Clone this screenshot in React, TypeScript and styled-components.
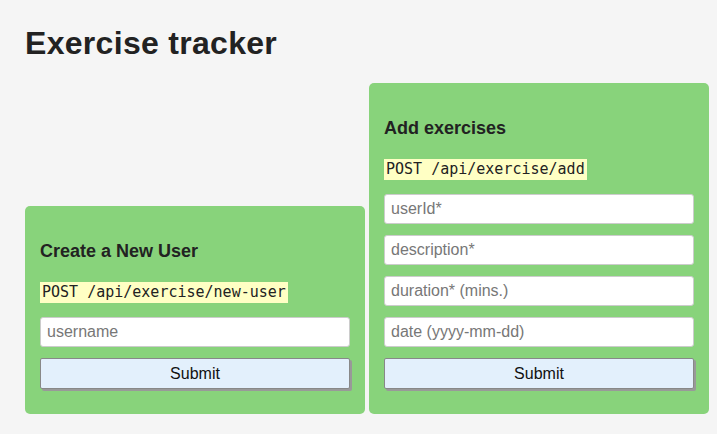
import styled, { createGlobalStyle } from "styled-components";

const GlobalStyle = createGlobalStyle`
  html, body {
    margin: 0;
    padding: 0;
    background: #f5f5f5;
    color: #222;
    font-family: "Liberation Sans", Arial, sans-serif;
  }
`;

const Page = styled.div`
  padding: 25px 8px 0 25px;
`;

const Title = styled.h1`
  margin: 0;
  font-size: 32px;
  line-height: 37px;
  font-weight: bold;
  letter-spacing: 0.3px;
  color: #222;
`;

const Row = styled.div`
  display: flex;
  align-items: flex-end;
  gap: 4px;
  margin-top: 21px;
`;

const Card = styled.form`
  flex: 1;
  display: flex;
  flex-direction: column;
  background: #88d37b;
  border-radius: 5px;
  padding: 35px 15px 25px;
`;

const CardTitle = styled.h3`
  margin: 0;
  font-size: 18px;
  line-height: 21px;
  font-weight: bold;
  color: #222;
`;

const Endpoint = styled.p`
  margin: 19px 0 14px;
  line-height: 21px;
  code {
    display: inline-block;
    background: #ffffc4;
    padding: 0 2px;
    font-family: "DejaVu Sans Mono", "Liberation Mono", monospace;
    font-size: 15px;
    line-height: 21px;
    color: #222;
  }
`;

const Fields = styled.div`
  display: flex;
  flex-direction: column;
  gap: 11px;
`;

const Input = styled.input`
  box-sizing: border-box;
  width: 100%;
  height: 30px;
  margin: 0;
  padding: 0 6px;
  border: 1px solid #ccc;
  border-radius: 3px;
  background: #fff;
  font-family: "Liberation Sans", Arial, sans-serif;
  font-size: 16px;
  color: #222;
  &::placeholder {
    color: #777;
  }
`;

const SubmitButton = styled.button`
  box-sizing: border-box;
  width: 100%;
  height: 31px;
  margin: 0;
  border: 1px solid #888;
  border-radius: 2px;
  background: #e3f0fc;
  box-shadow: 2px 2px 0 #999;
  font-family: "Liberation Sans", Arial, sans-serif;
  font-size: 16px;
  color: #111;
`;

interface FormProps {
  title: string;
  endpoint: string;
  fields: string[];
}

function ApiForm({ title, endpoint, fields }: FormProps) {
  return (
    <Card onSubmit={(e) => e.preventDefault()}>
      <CardTitle>{title}</CardTitle>
      <Endpoint>
        <code>{endpoint}</code>
      </Endpoint>
      <Fields>
        {fields.map((f) => (
          <Input key={f} type="text" placeholder={f} />
        ))}
        <SubmitButton type="submit">Submit</SubmitButton>
      </Fields>
    </Card>
  );
}

export default function App() {
  return (
    <>
      <GlobalStyle />
      <Page>
        <Title>Exercise tracker</Title>
        <Row>
          <ApiForm
            title="Create a New User"
            endpoint="POST /api/exercise/new-user"
            fields={["username"]}
          />
          <ApiForm
            title="Add exercises"
            endpoint="POST /api/exercise/add"
            fields={["userId*", "description*", "duration* (mins.)", "date (yyyy-mm-dd)"]}
          />
        </Row>
      </Page>
    </>
  );
}
